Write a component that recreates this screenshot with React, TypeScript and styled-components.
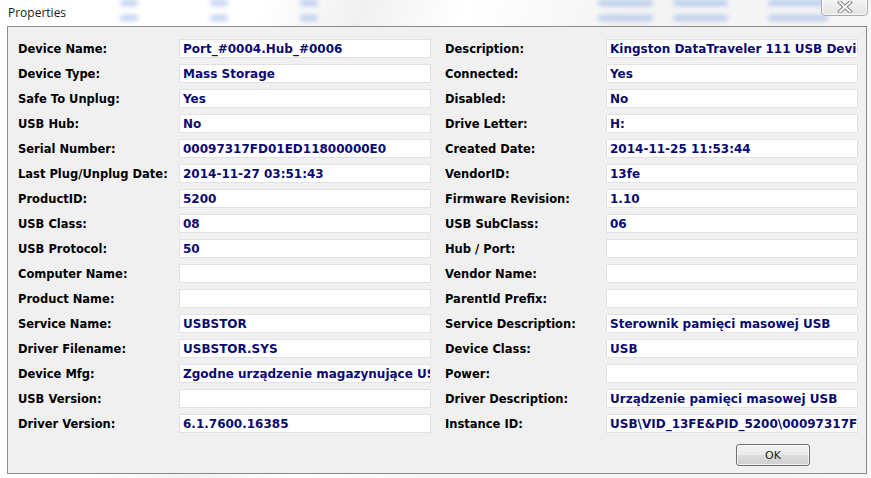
import React from "react";
import styled, { createGlobalStyle } from "styled-components";

const GlobalStyle = createGlobalStyle`
  html, body {
    margin: 0;
    padding: 0;
    width: 871px;
    height: 478px;
    overflow: hidden;
    background: #ffffff;
  }
`;

const Window = styled.div`
  position: relative;
  width: 871px;
  height: 478px;
  display: flex;
  flex-direction: column;
  background: linear-gradient(110deg, #ffffff 0%, #ffffff 25%, #f1f1f1 35%, #ffffff 45%, #f4f4f4 60%, #f7f7f7 100%);
  overflow: hidden;
`;

const Backdrop = styled.div`
  position: absolute;
  top: 0;
  left: 0;
  right: 0;
  height: 26px;
  display: flex;
  flex-direction: column;
  gap: 8px;
  filter: blur(2.5px);
  opacity: 0.45;
  pointer-events: none;
`;

const BackdropRow = styled.div`
  display: flex;
  height: 7px;
`;

const Smudge = styled.span<{ $left: number; $w: number }>`
  display: block;
  margin-left: ${(p) => p.$left}px;
  width: ${(p) => p.$w}px;
  height: 6px;
  background: #6f98e0;
  border-radius: 3px;
`;

const TitleBar = styled.div`
  position: relative;
  height: 26px;
  display: flex;
  justify-content: space-between;
  align-items: flex-start;
  padding: 0 3px 0 8px;
`;

const Title = styled.span`
  margin-top: 4px;
  font-family: "Open Sans", "Noto Sans", sans-serif;
  font-size: 12px;
  color: #1a1a1a;
`;

const CloseButton = styled.div`
  width: 45px;
  height: 16px;
  margin-top: -1px;
  border: 1px solid #a8a8a8;
  border-top: none;
  border-radius: 0 0 5px 5px;
  background: linear-gradient(#f4f4f4, #e4e4e4);
  box-shadow: inset 0 0 0 1px rgba(255, 255, 255, 0.8);
  display: flex;
  align-items: center;
  justify-content: center;
`;

const Client = styled.div`
  position: relative;
  flex: 1;
  margin: 0 4px 4px 7px;
  border: 1px solid #8a8a8a;
  background: #f0f0f0;
  padding: 12px 8px 7px 10px;
  display: flex;
  flex-direction: column;
`;

const Grid = styled.div`
  display: grid;
  grid-template-columns: 161px 252px 175px 252px;
  row-gap: 6px;
  grid-auto-rows: 19px;
`;

const Label = styled.div<{ $right?: boolean }>`
  display: flex;
  align-items: center;
  padding-left: ${(p) => (p.$right ? "14px" : "0")};
  font-family: "DejaVu Sans", sans-serif;
  font-weight: bold;
  font-size: 11.5px;
  color: #000;
  white-space: nowrap;
  overflow: hidden;
`;

const Value = styled.div`
  display: flex;
  align-items: center;
  background: #ffffff;
  border: 1px solid #e2e2e2;
  padding: 0 3px;
  font-family: "DejaVu Sans", sans-serif;
  font-weight: bold;
  font-size: 12px;
  color: #0a0a72;
  white-space: nowrap;
  overflow: hidden;
`;

const Footer = styled.div`
  margin-top: 11px;
  display: flex;
  justify-content: flex-end;
  padding-right: 48px;
`;

const OkButton = styled.button`
  width: 74px;
  height: 22px;
  border: 1px solid #707070;
  border-radius: 3px;
  background: linear-gradient(#f2f2f2 0%, #ebebeb 50%, #dddddd 51%, #cfcfcf 100%);
  box-shadow: inset 0 0 0 1px rgba(255, 255, 255, 0.7);
  font-family: "DejaVu Sans", sans-serif;
  font-size: 11px;
  color: #222;
  padding: 0;
`;

const rows: [string, string, string, string][] = [
  ["Device Name:", "Port_#0004.Hub_#0006", "Description:", "Kingston DataTraveler 111 USB Device"],
  ["Device Type:", "Mass Storage", "Connected:", "Yes"],
  ["Safe To Unplug:", "Yes", "Disabled:", "No"],
  ["USB Hub:", "No", "Drive Letter:", "H:"],
  ["Serial Number:", "00097317FD01ED11800000E0", "Created Date:", "2014-11-25 11:53:44"],
  ["Last Plug/Unplug Date:", "2014-11-27 03:51:43", "VendorID:", "13fe"],
  ["ProductID:", "5200", "Firmware Revision:", "1.10"],
  ["USB Class:", "08", "USB SubClass:", "06"],
  ["USB Protocol:", "50", "Hub / Port:", ""],
  ["Computer Name:", "", "Vendor Name:", ""],
  ["Product Name:", "", "ParentId Prefix:", ""],
  ["Service Name:", "USBSTOR", "Service Description:", "Sterownik pamięci masowej USB"],
  ["Driver Filename:", "USBSTOR.SYS", "Device Class:", "USB"],
  ["Device Mfg:", "Zgodne urządzenie magazynujące USB", "Power:", ""],
  ["USB Version:", "", "Driver Description:", "Urządzenie pamięci masowej USB"],
  ["Driver Version:", "6.1.7600.16385", "Instance ID:", "USB\\VID_13FE&PID_5200\\00097317FD01ED11800000E0"],
];

const smudges = [
  { left: 120, w: 18 },
  { left: 72, w: 18 },
  { left: 72, w: 18 },
  { left: 280, w: 55 },
  { left: 20, w: 55 },
  { left: 40, w: 60 },
];

function CloseGlyph() {
  return (
    <svg width="16" height="12" viewBox="0 0 16 12">
      <path d="M3 1.5 L13 10.5 M13 1.5 L3 10.5" stroke="#8a8a8a" strokeWidth="4" strokeLinecap="square" />
      <path d="M3 1.5 L13 10.5 M13 1.5 L3 10.5" stroke="#f6f6f6" strokeWidth="2" strokeLinecap="square" />
    </svg>
  );
}

export default function App() {
  return (
    <>
      <GlobalStyle />
      <Window>
        <Backdrop>
          {[0, 1].map((r) => (
            <BackdropRow key={r}>
              {smudges.map((s, i) => (
                <Smudge key={i} $left={s.left} $w={s.w} />
              ))}
            </BackdropRow>
          ))}
        </Backdrop>
        <TitleBar>
          <Title>Properties</Title>
          <CloseButton>
            <CloseGlyph />
          </CloseButton>
        </TitleBar>
        <Client>
          <Grid>
            {rows.map((r) => (
              <React.Fragment key={r[0]}>
                <Label>{r[0]}</Label>
                <Value>{r[1]}</Value>
                <Label $right>{r[2]}</Label>
                <Value>{r[3]}</Value>
              </React.Fragment>
            ))}
          </Grid>
          <Footer>
            <OkButton>OK</OkButton>
          </Footer>
        </Client>
      </Window>
    </>
  );
}
